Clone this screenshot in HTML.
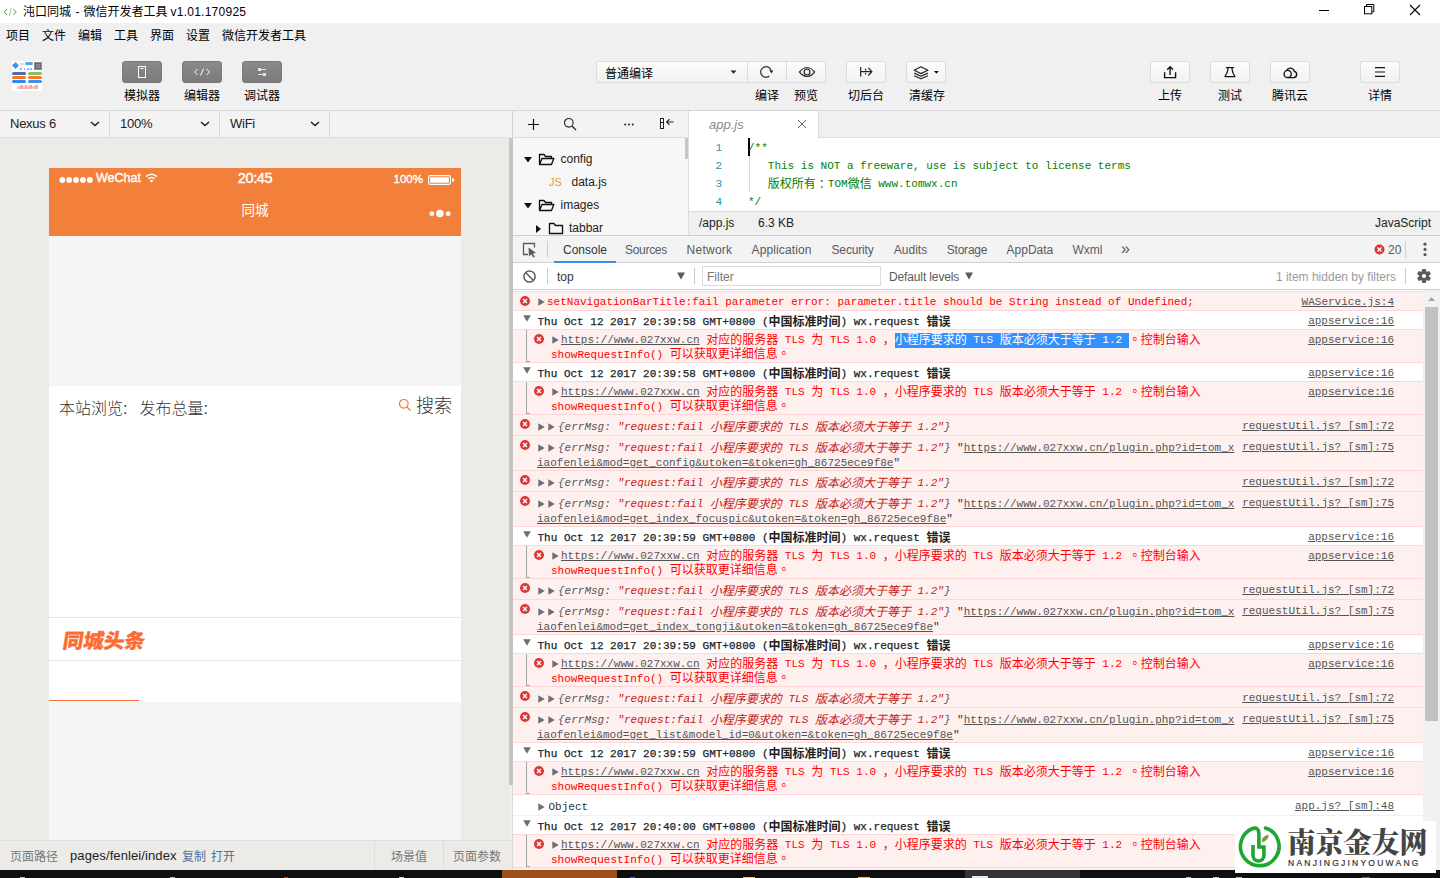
<!DOCTYPE html>
<html lang="zh-CN"><head><meta charset="utf-8"><title>微信开发者工具</title>
<style>
*{box-sizing:border-box;margin:0;padding:0}
html,body{width:1440px;height:878px;overflow:hidden;background:#f0f0f0}
body{font-family:"Liberation Sans","Noto Sans CJK SC",sans-serif;font-size:12px;color:#000}
#app{position:relative;width:1440px;height:878px;overflow:hidden;background:#f0f0f0}
.abs{position:absolute}
.ui{font-family:"Liberation Sans","Noto Sans CJK SC",sans-serif}
/* title bar */
#title{position:absolute;left:0;top:0;width:1440px;height:23px;background:#fff}
#title .t{position:absolute;left:23px;top:0;line-height:23px;font-size:12px;color:#000;white-space:nowrap;font-family:"Liberation Sans","Noto Sans CJK SC",sans-serif}
#menu{position:absolute;left:0;top:23px;width:1440px;height:24px}
#menu span{position:absolute;top:1px;line-height:24px;font-size:12px;white-space:nowrap;font-family:"Liberation Sans","Noto Sans CJK SC",sans-serif}
/* toolbar */
.tbtn{position:absolute;top:61px;width:40px;height:22px;border:1px solid #dcdcdc;border-radius:2px;background:linear-gradient(#fcfcfc,#f1f1f1)}
.tbtn.dark{background:linear-gradient(#8a8a8a,#7c7a7a);border:1px solid #7a7878;border-radius:3px}
.tlab{position:absolute;top:87px;width:80px;text-align:center;line-height:18px;font-size:12px;white-space:nowrap;font-family:"Liberation Sans","Noto Sans CJK SC",sans-serif}
.tbtn svg{position:absolute;left:0;top:0}
#hline{position:absolute;left:0;top:110px;width:1440px;height:1px;background:#d8d8d8}
/* sim toolbar */
.sel{position:absolute;top:111px;height:26px;line-height:26px;font-size:13px;color:#222;border-right:1px solid #d8d8d8;padding-left:10px;font-family:"Liberation Sans",sans-serif;letter-spacing:-0.25px}
.sel svg{position:absolute;right:9px;top:10px}
#simbg{position:absolute;left:0;top:137px;width:510px;height:703px;background:#ecebe8;border-top:1px solid #dedede}
#phone{position:absolute;left:49px;top:168px;width:412px;height:672px;background:#f5f5f5;overflow:hidden}
#phead{position:absolute;left:0;top:0;width:412px;height:68px;background:#f3803a;color:#fff}
#simfoot{position:absolute;left:0;top:840px;width:512px;height:30px;background:#ecebe8;border-top:1px solid #dcdcdc;font-size:12px;font-family:"Liberation Sans","Noto Sans CJK SC",sans-serif}
#simfoot span{position:absolute;top:2px;line-height:29px;white-space:nowrap}
#taskbar{position:absolute;left:0;top:870px;width:1440px;height:8px;background:#0f0f0f}
/* editor */
#split{position:absolute;left:510px;top:137px;width:4px;height:733px;background:#d3d3d3}
#treebar{position:absolute;left:513px;top:111px;width:175px;height:27px;background:#f3f3f3;border-bottom:1px solid #dcdcdc}
#tree{position:absolute;left:513px;top:138px;width:175px;height:97px;background:#f3f3f3;overflow:hidden;font-size:12px;color:#222}
#tree .r{position:absolute;left:0;height:23px;line-height:23px;white-space:nowrap}
#edtabs{position:absolute;left:688px;top:111px;width:752px;height:27px;background:#f0f0f0;border-bottom:1px solid #dcdcdc;border-left:1px solid #dcdcdc}
#edtab{position:absolute;left:689px;top:111px;width:130px;height:27px;background:#fff;border-right:1px solid #dcdcdc;font-style:italic;font-size:13px;color:#8a8a8a;line-height:27px}
#code{position:absolute;left:689px;top:138px;width:751px;height:73px;padding-top:1px;background:#fff;font-family:"Liberation Mono","Noto Sans CJK SC",monospace;font-size:11px}
#code .ln{position:absolute;left:0;width:33px;text-align:right;color:#2b91af;line-height:18px;font-size:11px}
#code .cl span{line-height:1px;position:relative;top:0.8px}
#code .cl{position:absolute;left:59px;color:#008000;line-height:18px;white-space:pre}
#edstat{position:absolute;left:688px;top:211px;width:752px;height:24px;background:#f0f0f0;border-top:1px solid #dcdcdc;border-left:1px solid #dcdcdc;font-size:12px;color:#222;line-height:23px}
/* devtools */
#dtabs{position:absolute;left:514px;top:235px;width:926px;height:28px;background:#f3f3f3;border-top:1px solid #cfcfcf;border-bottom:1px solid #cfcfcf}
#dtabs .tb{position:absolute;top:1px;line-height:27px;font-size:12px;color:#5a5a5a;white-space:nowrap;font-family:"Liberation Sans",sans-serif}
#ctool{position:absolute;left:514px;top:263px;width:926px;height:27px;background:#fff;border-bottom:1px solid #cfcfcf}
#ctool .tx{position:absolute;top:1px;line-height:27px;font-size:12px;white-space:nowrap;color:#5a5a5a}
#con{position:absolute;left:513px;top:290px;width:910px;height:580px;background:#fff;overflow:hidden;font-family:"Liberation Mono","Noto Sans CJK SC",monospace;font-size:11px;color:#303030}
#con .c{font-size:12px;line-height:1px;position:relative;top:0.8px}
#con .row{position:absolute;left:0;width:910px}
#con .in{position:absolute;left:1px;top:0;width:909px;height:100%}
#con .row.e{background:#fff0f0;border-top:1px solid #ffd6d6;border-bottom:1px solid #ffd6d6}
#con .row.g{background:#fff;border-top:1px solid #f0f0f0}
#con .t{position:absolute;white-space:pre;line-height:14px;height:14px}
#con .red{color:#ff0000}
#con .lnk{color:#545454;text-decoration:underline}
#con .src{position:absolute;right:29px;white-space:pre;line-height:14px;color:#545454;text-decoration:underline}
#con .it{font-style:italic}
#con .str{color:#c41a16}
#con .gray{color:#565656}
#con .b{color:#222;-webkit-text-stroke:0.25px #222}
#con .b .c{font-weight:bold;-webkit-text-stroke:0}
#con .ei{position:absolute;width:10px;height:10px}
#con .tri{position:absolute;width:0;height:0}
#con .tc{font-family:'Noto Sans CJK TC',sans-serif}
#con .hl{background:#3390ff;color:#fff;padding:1px 0 2px 0}
#vscroll{position:absolute;left:1423px;top:291px;width:17px;height:579px;background:#f1f1f1}
#vscroll i{position:absolute;left:2px;top:16px;width:13px;height:414px;background:#c1c1c1}

</style></head><body>
<div id="app">
<div id="title">
  <svg class="abs" style="left:3px;top:5.5px" width="16" height="12" viewBox="0 0 16 12"><path d="M4 3 L1.3 6 L4 9" fill="none" stroke="#5aa846" stroke-width="1"/><path d="M10.5 3 L13.2 6 L10.5 9" fill="none" stroke="#5aa846" stroke-width="1"/><path d="M8.1 2.2 L6.4 9.8" fill="none" stroke="#9ccf8e" stroke-width="1"/></svg>
  <span class="t" style="top:1px">沌口同城</span><span class="t" style="left:75.5px;top:1px">-</span><span class="t" style="left:83.5px;top:1px">微信开发者工具</span><span class="t" style="left:170.5px;top:1px;letter-spacing:0.25px">v1.01.170925</span>
  <svg class="abs" style="left:1318px;top:4px" width="12" height="12" viewBox="0 0 12 12"><path d="M1 6.5 H11" stroke="#000" stroke-width="1"/></svg>
  <svg class="abs" style="left:1363px;top:3px" width="13" height="13" viewBox="0 0 13 13"><rect x="1.5" y="3.5" width="7.3" height="7.3" fill="none" stroke="#000" stroke-width="1"/><path d="M3.5 3.5 V1.5 H10.8 V8.8 H8.8" fill="none" stroke="#000" stroke-width="1"/></svg>
  <svg class="abs" style="left:1409px;top:4px" width="12" height="12" viewBox="0 0 12 12"><path d="M1 1 L11 11 M11 1 L1 11" stroke="#000" stroke-width="1.1"/></svg>
</div>
<div id="menu">
  <span style="left:6px">项目</span><span style="left:42px">文件</span><span style="left:78px">编辑</span><span style="left:114px">工具</span><span style="left:150px">界面</span><span style="left:186px">设置</span><span style="left:222px">微信开发者工具</span>
</div>
<!-- project thumbnail -->
<div class="abs" style="left:12px;top:61px;width:30px;height:30px;background:#fff;border-radius:2px;overflow:hidden">
  <div class="abs" style="left:1.2px;top:2.2px;width:5px;height:5px;background:#3a96ee;transform:rotate(45deg)"></div>
  <div class="abs" style="left:7.5px;top:1.5px;width:4px;height:2.5px;background:#fbd3ae"></div>
  <div class="abs" style="left:12.7px;top:1px;width:8px;height:3px;background:#58a6ea;border-radius:1.5px"></div>
  <div class="abs" style="left:8px;top:6.8px;width:1.5px;height:1.8px;background:#7cc0f5"></div>
  <div class="abs" style="left:11.5px;top:6.8px;width:1.5px;height:1.8px;background:#7cc0f5"></div>
  <div class="abs" style="left:15px;top:6.8px;width:1.5px;height:1.8px;background:#7cc0f5"></div>
  <div class="abs" style="left:18.2px;top:6.8px;width:2px;height:1.8px;background:#7cc0f5"></div>
  <div class="abs" style="left:22px;top:1px;width:8px;height:8px;background:#7d7d7d;border:1px solid #8f8f8f;box-shadow:inset 0 0 0 1px #6a6a6a, inset 0 0 0 2px #8c8c8c"></div>
  <div class="abs" style="left:0;top:11px;width:14px;height:3px;background:#4c70ad;border-radius:1.5px"></div>
  <div class="abs" style="left:16px;top:11px;width:14px;height:3px;background:#8abf6a;border-radius:1.5px"></div>
  <div class="abs" style="left:0;top:15.3px;width:14px;height:3.2px;background:#f47b22;border-radius:1.5px"></div>
  <div class="abs" style="left:16px;top:15.3px;width:14px;height:3.2px;background:#f47b22;border-radius:1.5px"></div>
  <div class="abs" style="left:0;top:19px;width:14px;height:2.8px;background:#2b8af2;border-radius:1.5px"></div>
  <div class="abs" style="left:16px;top:19px;width:14px;height:2.8px;background:#3d93ee;border-radius:1.5px"></div>
  <div class="abs" style="left:5px;top:24.5px;width:21px;height:3px;background:#f7c4c2"></div>
  <div class="abs" style="left:8px;top:24px;width:3px;height:4px;background:#f3a9a6"></div>
  <div class="abs" style="left:13px;top:24px;width:2px;height:4px;background:#f3a9a6"></div>
  <div class="abs" style="left:17px;top:24px;width:3px;height:4px;background:#f3a9a6"></div>
  <div class="abs" style="left:22.5px;top:23.5px;width:3px;height:4px;background:#f3a9a6"></div>
</div>
<!-- dark buttons -->
<div class="tbtn dark" style="left:122px"><svg width="38" height="20" viewBox="0 0 38 20"><rect x="15.5" y="4.5" width="7" height="11" fill="none" stroke="#fff" stroke-width="1"/><path d="M17.5 6.5 H20.5" stroke="#fff" stroke-width="1"/></svg></div>
<div class="tbtn dark" style="left:182px"><svg width="38" height="20" viewBox="0 0 38 20"><path d="M14.5 7 L11.5 10 L14.5 13 M23.5 7 L26.5 10 L23.5 13 M20.5 6.5 L17.5 13.5" fill="none" stroke="#fff" stroke-width="1"/></svg></div>
<div class="tbtn dark" style="left:242px"><svg width="38" height="20" viewBox="0 0 38 20"><path d="M15 7.5 H23 M15 12.5 H23" stroke="#e4e4e4" stroke-width="1"/><rect x="15" y="6" width="3" height="3" fill="#e4e4e4"/><rect x="20" y="11" width="3" height="3" fill="#e4e4e4"/></svg></div>
<div class="tlab" style="left:102px">模拟器</div>
<div class="tlab" style="left:162px">编辑器</div>
<div class="tlab" style="left:222px">调试器</div>
<!-- compile select -->
<div class="abs" style="left:596px;top:61px;width:230px;height:22px;border:1px solid #dcdcdc;border-radius:2px;background:linear-gradient(#fcfcfc,#f1f1f1)"></div>
<div class="abs" style="left:747px;top:62px;width:1px;height:20px;background:#dcdcdc"></div>
<div class="abs" style="left:786px;top:62px;width:1px;height:20px;background:#dcdcdc"></div>
<div class="abs ui" style="left:605px;top:63px;line-height:23px;font-size:12px">普通编译</div>
<svg class="abs" style="left:730px;top:70px" width="7" height="4" viewBox="0 0 7 4"><path d="M0.5 0.5 H6.5 L3.5 3.8 Z" fill="#222"/></svg>
<svg class="abs" style="left:756.3px;top:62.7px" width="20" height="18" viewBox="0 0 20 18"><path d="M15.3 9 A5.3 5.3 0 1 0 13.4 13.06" fill="none" stroke="#333" stroke-width="1.2"/><path d="M13.2 7.4 H17.4 L15.5 10.6 Z" fill="#333"/></svg>
<svg class="abs" style="left:796.6px;top:63.8px" width="20" height="16" viewBox="0 0 20 16"><path d="M2.4 8 Q10 -1 17.6 8 Q10 17 2.4 8 Z" fill="none" stroke="#333" stroke-width="1.2"/><circle cx="10" cy="8" r="2.9" fill="none" stroke="#333" stroke-width="1.3"/></svg>
<div class="tlab" style="left:727px">编译</div>
<div class="tlab" style="left:766px">预览</div>
<div class="tbtn" style="left:846px"><svg width="38" height="20" viewBox="0 0 38 20"><path d="M13.7 5 V14.6 M13.7 9.7 H24.5 M21.3 5.9 L24.9 9.7 L21.3 13.5" fill="none" stroke="#222" stroke-width="1.2"/><path d="M18.6 6.8 V8.4 M18.6 11 V12.6" stroke="#222" stroke-width="1.2"/></svg></div>
<div class="tlab" style="left:826px">切后台</div>
<div class="tbtn" style="left:906px"><svg width="38" height="20" viewBox="0 0 38 20"><path d="M7.2 8.3 L14 4.8 L20.9 8.3 L14 11.6 Z M7.2 11.1 L14 14.3 L20.9 11.1 M7.2 13.7 L14 16.8 L20.9 13.7" fill="none" stroke="#222" stroke-width="1.2" stroke-linejoin="round"/><path d="M27 9 H31.8 L29.4 11.7 Z" fill="#111"/></svg></div>
<div class="tlab" style="left:887px">清缓存</div>
<div class="tbtn" style="left:1150px"><svg width="38" height="20" viewBox="0 0 38 20"><path d="M13.6 10.3 V15.6 H24.6 V10.3 M19.1 13 V5 M16.2 7.8 L19.1 4.8 L22 7.8" fill="none" stroke="#111" stroke-width="1.35"/></svg></div>
<div class="tlab" style="left:1130px">上传</div>
<div class="tbtn" style="left:1210px"><svg width="38" height="20" viewBox="0 0 38 20"><path d="M14.9 5.6 H23.1" stroke="#111" stroke-width="1.2"/><path d="M16.9 5.6 V7.6 Q16.4 11 13.9 14.6 H24 Q21.5 11 21.1 7.6 V5.6" fill="none" stroke="#111" stroke-width="1.2" stroke-linejoin="round"/></svg></div>
<div class="tlab" style="left:1190px">测试</div>
<div class="tbtn" style="left:1270px"><svg width="38" height="20" viewBox="0 0 38 20"><path d="M16.8 15.6 H22.4 A3.15 3.15 0 0 0 23.3 9.4 A4 4 0 0 0 15.7 8.5" fill="none" stroke="#111" stroke-width="1.35"/><circle cx="16.7" cy="12" r="3.6" fill="none" stroke="#111" stroke-width="1.35"/></svg></div>
<div class="tlab" style="left:1250px">腾讯云</div>
<div class="tbtn" style="left:1360px"><svg width="38" height="20" viewBox="0 0 38 20"><path d="M14 5.6 H24 M14 10 H24 M14 14.3 H24" stroke="#111" stroke-width="1.15"/></svg></div>
<div class="tlab" style="left:1340px">详情</div>
<div id="hline"></div>
<!-- simulator toolbar -->
<div class="abs" style="left:0;top:111px;width:512px;height:26px;background:#f3f3f3"></div>
<div class="sel" style="left:0;width:110px">Nexus 6<svg width="10" height="6" viewBox="0 0 10 6"><path d="M1 1 L5 4.6 L9 1" fill="none" stroke="#222" stroke-width="1.5"/></svg></div>
<div class="sel" style="left:110px;width:110px">100%<svg width="10" height="6" viewBox="0 0 10 6"><path d="M1 1 L5 4.6 L9 1" fill="none" stroke="#222" stroke-width="1.5"/></svg></div>
<div class="sel" style="left:220px;width:110px">WiFi<svg width="10" height="6" viewBox="0 0 10 6"><path d="M1 1 L5 4.6 L9 1" fill="none" stroke="#222" stroke-width="1.5"/></svg></div>
<div class="abs" style="left:512px;top:111px;width:1px;height:26px;background:#d2d2d2"></div>
<div id="simbg"></div>
<div class="abs" style="left:512px;top:137px;width:1px;height:733px;background:#dadada"></div>
<div class="abs" style="left:509px;top:138px;width:4px;height:647px;background:#c5c5c5"></div>
<div id="phone">
  <div id="phead">
    <svg class="abs" style="left:9px;top:8px" width="36" height="8" viewBox="0 0 36 8"><circle cx="4.3" cy="4" r="2.9" fill="#fff"/><circle cx="11.2" cy="4" r="2.9" fill="#fff"/><circle cx="18.1" cy="4" r="2.9" fill="#fff"/><circle cx="25" cy="4" r="2.9" fill="#fff"/><circle cx="31.9" cy="4" r="2.9" fill="#fff"/></svg>
    <div class="abs" style="left:47px;top:3px;line-height:14px;font-size:12.5px;font-weight:normal;-webkit-text-stroke:0.4px #fff;letter-spacing:0px">WeChat</div>
    <svg class="abs" style="left:96px;top:5px" width="13" height="10" viewBox="0 0 13 10"><path d="M1 3.6 Q6.5 -1.2 12 3.6" fill="none" stroke="#fff" stroke-width="1.4"/><path d="M3.2 5.8 Q6.5 3 9.8 5.8" fill="none" stroke="#fff" stroke-width="1.4"/><circle cx="6.5" cy="8" r="1.3" fill="#fff"/></svg>
    <div class="abs" style="left:156px;top:1px;width:100px;text-align:center;line-height:18px;font-size:14.5px;font-weight:normal;-webkit-text-stroke:0.4px #fff;letter-spacing:-0.4px">20:45</div>
    <div class="abs" style="left:344.5px;top:4px;line-height:14px;font-size:11.5px;font-weight:normal;-webkit-text-stroke:0.35px #fff;letter-spacing:0px">100%</div>
    <svg class="abs" style="left:378px;top:6px" width="30" height="12" viewBox="0 0 30 12"><rect x="1.6" y="1.6" width="21.9" height="8.8" rx="1.6" fill="none" stroke="#fff" stroke-width="1.1"/><rect x="3.2" y="3.2" width="18.7" height="5.6" rx="0.4" fill="#fff"/><path d="M25.2 4 L27.2 5 V7 L25.2 8 Z" fill="#fff"/></svg>
    <div class="abs ui" style="left:156px;top:33px;width:100px;text-align:center;line-height:20px;font-size:13.5px">同城</div>
    <svg class="abs" style="left:380px;top:40px" width="24" height="10" viewBox="0 0 24 10"><circle cx="2.8" cy="5.7" r="2.4" fill="#fff"/><circle cx="10.9" cy="5.5" r="3.75" fill="#fff"/><circle cx="19.2" cy="5.7" r="2.4" fill="#fff"/></svg>
  </div>
  <div class="abs" style="left:0;top:218px;width:412px;height:316px;background:#fff"></div>
  <div class="abs ui" style="left:10px;top:230.3px;line-height:22px;font-size:16px;color:#333;white-space:pre;font-weight:300">本站浏览:</div><div class="abs ui" style="left:90.5px;top:230.3px;line-height:22px;font-size:16px;color:#333;white-space:pre;font-weight:300">发布总量:</div>
  <svg class="abs" style="left:349px;top:230px" width="14" height="14" viewBox="0 0 14 14"><circle cx="5.8" cy="5.8" r="4.3" fill="none" stroke="#f07a3c" stroke-width="1.2"/><path d="M9 9 L12.6 12.6" stroke="#f07a3c" stroke-width="1.3"/></svg>
  <div class="abs ui" style="left:367px;top:224.5px;line-height:26px;font-size:18px;color:#333;font-weight:300">搜索</div>
  <div class="abs" style="left:0;top:449px;width:412px;height:1px;background:#e6e6e6"></div>
  <div class="abs" style="left:12px;top:459px;line-height:28px;font-size:20px;color:#fd6b30;font-weight:900;font-family:'Liberation Sans','Noto Sans CJK SC',sans-serif;transform:skewX(-9deg) scaleX(1.025);transform-origin:0 100%;-webkit-text-stroke:0.3px #fd6b30">同城头条</div>
  <div class="abs" style="left:0;top:492px;width:412px;height:1px;background:#e6e6e6"></div>
  <div class="abs" style="left:0;top:532px;width:90px;height:1px;background:#fb7038"></div>
</div>
<div id="simfoot">
  <span style="left:10px;color:#777">页面路径</span>
  <span style="left:70px;top:0;color:#222;font-family:'Liberation Sans',sans-serif;font-size:13px;letter-spacing:0.1px">pages/fenlei/index</span>
  <span style="left:182px;color:#50709a">复制</span>
  <span style="left:211px;color:#50709a">打开</span>
  <span style="left:391px;color:#777">场景值</span>
  <span style="left:453px;color:#777">页面参数</span>
  <div class="abs" style="left:374px;top:0;width:1px;height:30px;background:#dcdcdc"></div>
  <div class="abs" style="left:443px;top:0;width:1px;height:30px;background:#dcdcdc"></div>
</div>
<div id="treebar">
  <svg class="abs" style="left:15px;top:8px" width="11" height="11" viewBox="0 0 11 11"><path d="M5.5 0 V11 M0 5.5 H11" stroke="#111" stroke-width="1.2"/></svg>
  <svg class="abs" style="left:50px;top:6px" width="14" height="14" viewBox="0 0 14 14"><circle cx="5.8" cy="5.8" r="4.3" fill="none" stroke="#222" stroke-width="1.1"/><path d="M9 9 L13 13" stroke="#222" stroke-width="1.2"/></svg>
  <svg class="abs" style="left:111px;top:12px" width="10" height="3" viewBox="0 0 10 3"><circle cx="1.2" cy="1.5" r="1" fill="#222"/><circle cx="5" cy="1.5" r="1" fill="#222"/><circle cx="8.8" cy="1.5" r="1" fill="#222"/></svg>
  <svg class="abs" style="left:146px;top:6px" width="16" height="14" viewBox="0 0 16 14"><rect x="1.5" y="1.5" width="3" height="10" fill="none" stroke="#222" stroke-width="1"/><path d="M2 5.5 H4.5" stroke="#222" stroke-width="1"/><path d="M14.5 5 H8 M10.5 2.2 L7.6 5 L10.5 7.8" fill="none" stroke="#222" stroke-width="1.1"/></svg>
</div>
<div id="tree" style="background:#f7f7f7">
  <div class="r" style="top:10px">
    <svg class="abs" style="left:11px;top:9px" width="8" height="5.5" viewBox="0 0 8 5.5"><path d="M0 0 H8 L4 5.5 Z" fill="#111"/></svg>
    <svg class="abs" style="left:25px;top:5px" width="17" height="13" viewBox="0 0 17 13"><path d="M1.5 11.5 V1.5 H6 L7.5 3.5 H13.5 V5.5 M1.5 11.5 L4 5.5 H15.8 L13.5 11.5 Z" fill="none" stroke="#111" stroke-width="1.35" stroke-linejoin="round"/></svg>
    <span class="abs" style="left:47.5px">config</span>
  </div>
  <div class="r" style="top:33px">
    <span class="abs" style="left:36px;color:#e6a01c;font-size:11px;font-family:'Liberation Sans',sans-serif">JS</span>
    <span class="abs" style="left:58.5px">data.js</span>
  </div>
  <div class="r" style="top:56px">
    <svg class="abs" style="left:11px;top:9px" width="8" height="5.5" viewBox="0 0 8 5.5"><path d="M0 0 H8 L4 5.5 Z" fill="#111"/></svg>
    <svg class="abs" style="left:25px;top:5px" width="17" height="13" viewBox="0 0 17 13"><path d="M1.5 11.5 V1.5 H6 L7.5 3.5 H13.5 V5.5 M1.5 11.5 L4 5.5 H15.8 L13.5 11.5 Z" fill="none" stroke="#111" stroke-width="1.35" stroke-linejoin="round"/></svg>
    <span class="abs" style="left:47.5px">images</span>
  </div>
  <div class="r" style="top:79px">
    <svg class="abs" style="left:23.3px;top:8px" width="5" height="8" viewBox="0 0 5 8"><path d="M0 0 V8 L5 4 Z" fill="#111"/></svg>
    <svg class="abs" style="left:35px;top:5px" width="16" height="13" viewBox="0 0 16 13"><path d="M1.5 11.5 V1.5 H6 L7.5 3.5 H14.5 V11.5 Z" fill="none" stroke="#111" stroke-width="1.35" stroke-linejoin="round"/></svg>
    <span class="abs" style="left:56px">tabbar</span>
  </div>
  <div class="abs" style="left:172px;top:0;width:3px;height:21px;background:#c6c6c6"></div>
</div>
<div id="edtabs"></div>
<div id="edtab"><span class="abs" style="left:20px">app.js</span>
  <svg class="abs" style="left:108px;top:8px" width="10" height="10" viewBox="0 0 10 10"><path d="M1 1 L9 9 M9 1 L1 9" stroke="#666" stroke-width="1"/></svg>
</div>
<div id="code">
  <div class="ln" style="top:1px">1</div><div class="ln" style="top:19px">2</div><div class="ln" style="top:37px">3</div><div class="ln" style="top:55px">4</div>
  <div class="abs" style="left:59px;top:0;width:2px;height:18px;background:#000"></div>
  <div class="abs" style="left:59.5px;top:18px;width:1px;height:36px;background:#d8d8d8"></div>
  <div class="cl" style="top:1px">/**</div>
  <div class="cl" style="top:19px">   This is NOT a freeware, use is subject to license terms</div>
  <div class="cl" style="top:37px">   <span style="font-size:12px">版权所有<span lang="ja" style="font-family:'Noto Sans CJK JP',sans-serif">：</span></span>TOM<span style="font-size:12px">微信</span> www.tomwx.cn</div>
  <div class="cl" style="top:55px">*/</div>
</div>
<div id="edstat"><span class="abs" style="left:10px">/app.js</span><span class="abs" style="left:69px">6.3 KB</span><span class="abs" style="right:9px">JavaScript</span></div>
<div class="abs" style="left:688px;top:137px;width:1px;height:98px;background:#dcdcdc"></div>
<!-- devtools tabs -->
<div class="abs" style="left:513px;top:235px;width:1px;height:28px;background:#f3f3f3;border-top:1px solid #cfcfcf;border-bottom:1px solid #cfcfcf"></div>
<div class="abs" style="left:513px;top:263px;width:1px;height:27px;background:#fff;border-bottom:1px solid #cfcfcf"></div>
<div id="dtabs">
  <svg class="abs" style="left:8px;top:6px" width="16" height="16" viewBox="0 0 16 16"><path d="M6 12.5 H1.5 V1.5 H12.5 V5.5" fill="none" stroke="#5a5a5a" stroke-width="1.3"/><path d="M6.5 5.5 L7 14.5 L9.3 12.2 L11.2 15.6 L12.8 14.8 L10.9 11.4 L14 11 Z" fill="#5a5a5a"/></svg>
  <div class="abs" style="left:33px;top:5px;width:1px;height:16px;background:#ccc"></div>
  <span class="tb" style="left:49px;color:#333">Console</span>
  <span class="tb" style="left:111px;letter-spacing:-0.3px">Sources</span>
  <span class="tb" style="left:172.6px;letter-spacing:0.25px">Network</span>
  <span class="tb" style="left:237.5px;letter-spacing:0.13px">Application</span>
  <span class="tb" style="left:317.5px;letter-spacing:-0.15px">Security</span>
  <span class="tb" style="left:379.8px">Audits</span>
  <span class="tb" style="left:432.7px;letter-spacing:-0.2px">Storage</span>
  <span class="tb" style="left:492.6px">AppData</span>
  <span class="tb" style="left:558.5px">Wxml</span>
  <span class="tb" style="left:607px;font-size:16px;top:-1px">»</span>
  <div class="abs" style="left:40px;top:25px;width:62px;height:2px;background:#3b8cf2"></div>
  <svg class="abs" style="left:859.5px;top:7.5px" width="11" height="11" viewBox="0 0 11 11"><circle cx="5.5" cy="5.5" r="5" fill="#e0343c"/><path d="M3.5 3.5 L7.5 7.5 M7.5 3.5 L3.5 7.5" stroke="#fff" stroke-width="1.3"/></svg>
  <span class="tb" style="left:874px">20</span>
  <div class="abs" style="left:891px;top:5px;width:1px;height:17px;background:#ccc"></div>
  <svg class="abs" style="left:908.5px;top:6px" width="4" height="15" viewBox="0 0 4 15"><circle cx="2" cy="2.2" r="1.6" fill="#5a5a5a"/><circle cx="2" cy="7.4" r="1.6" fill="#5a5a5a"/><circle cx="2" cy="12.6" r="1.6" fill="#5a5a5a"/></svg>
</div>
<div id="ctool">
  <svg class="abs" style="left:9px;top:7px" width="13" height="13" viewBox="0 0 13 13"><circle cx="6.5" cy="6.5" r="5.6" fill="none" stroke="#5a5a5a" stroke-width="1.5"/><path d="M2.5 2.5 L10.5 10.5" stroke="#5a5a5a" stroke-width="1.5"/></svg>
  <div class="abs" style="left:33px;top:5px;width:1px;height:16px;background:#ccc"></div>
  <span class="tx" style="left:43px;color:#333">top</span>
  <svg class="abs" style="left:163px;top:9px" width="8" height="8" viewBox="0 0 8 8"><path d="M0 0.5 H8 L4 7.5 Z" fill="#5a5a5a"/></svg>
  <div class="abs" style="left:180px;top:5px;width:1px;height:16px;background:#ccc"></div>
  <div class="abs" style="left:188px;top:3px;width:179px;height:20px;border:1px solid #dcdcdc"></div>
  <span class="tx" style="left:193px;color:#777">Filter</span>
  <span class="tx" style="left:375px;letter-spacing:-0.13px">Default levels</span>
  <svg class="abs" style="left:451px;top:9px" width="8" height="8" viewBox="0 0 8 8"><path d="M0 0.5 H8 L4 7.5 Z" fill="#5a5a5a"/></svg>
  <span class="tx" style="right:44px;color:#9a9a9a">1 item hidden by filters</span>
  <div class="abs" style="left:891px;top:5px;width:1px;height:16px;background:#ccc"></div>
  <svg class="abs" style="left:903px;top:6px" width="14" height="14" viewBox="-7 -7 14 14"><g fill="#5a5a5a"><circle r="5"/><path d="M-1.7 -7 H1.7 L2.3 -4 H-2.3 Z" transform="rotate(0)"/><path d="M-1.7 -7 H1.7 L2.3 -4 H-2.3 Z" transform="rotate(60)"/><path d="M-1.7 -7 H1.7 L2.3 -4 H-2.3 Z" transform="rotate(120)"/><path d="M-1.7 -7 H1.7 L2.3 -4 H-2.3 Z" transform="rotate(180)"/><path d="M-1.7 -7 H1.7 L2.3 -4 H-2.3 Z" transform="rotate(240)"/><path d="M-1.7 -7 H1.7 L2.3 -4 H-2.3 Z" transform="rotate(300)"/></g><circle r="2.1" fill="#fff"/></svg>
</div>
<div id="con">
<div class="row e" style="top:1px;height:20px;z-index:2"><div class="in"><svg class="ei" style="left:6px;top:4px" viewBox="0 0 10 10"><circle cx="5" cy="5" r="5" fill="#dc3838"/><path d="M3.1 3.1 L6.9 6.9 M6.9 3.1 L3.1 6.9" stroke="#fff" stroke-width="1.4"/></svg><svg class="abs" style="left:24px;top:5.5px" width="7" height="8" viewBox="0 0 7 8"><path d="M0.3 0.3 V7.7 L6.7 4 Z" fill="#6e6e6e"/></svg><div class="t red" style="left:33px;top:3px">setNavigationBarTitle:fail parameter error: parameter.title should be String instead of Undefined;</div><div class="src" style="top:3px">WAService.js:4</div></div></div>
<div class="row g" style="top:20px;height:20px;z-index:1"><div class="in"><svg class="abs" style="left:9.2px;top:3.9px" width="8" height="7" viewBox="0 0 8 7"><path d="M0.2 0.2 H7.8 L4 6.8 Z" fill="#6e6e6e"/></svg><div class="t b" style="left:23.5px;top:3.75px">Thu Oct 12 2017 20:39:58 GMT+0800 (<span class="c">中国标准时间</span>) wx.request <span class="c">错误</span></div><div class="src" style="top:3px">appservice:16</div></div></div>
<div class="row e" style="top:39px;height:34px;z-index:2"><div class="in"><div class="abs" style="left:12px;top:0;width:1px;height:31px;background:#a3a3a3"></div><div class="abs" style="left:12px;top:31px;width:4px;height:1px;background:#a3a3a3"></div><svg class="ei" style="left:20px;top:4px" viewBox="0 0 10 10"><circle cx="5" cy="5" r="5" fill="#dc3838"/><path d="M3.1 3.1 L6.9 6.9 M6.9 3.1 L3.1 6.9" stroke="#fff" stroke-width="1.4"/></svg><svg class="abs" style="left:37.7px;top:5.5px" width="7" height="8" viewBox="0 0 7 8"><path d="M0.3 0.3 V7.7 L6.7 4 Z" fill="#6e6e6e"/></svg><div class="t red" style="left:47px;top:3.25px"><span class="lnk">https://www.027xxw.cn</span> <span class="c">对应的服务器</span> TLS <span class="c">为</span> TLS 1.0 <span class="c">，</span><span class="hl"><span class="c">小程序要求的</span> TLS <span class="c">版本必须大于等于</span> 1.2 </span><span class="c"><span class="tc" lang="zh-TW">。</span>控制台输入</span></div><div class="t red" style="left:37px;top:17.5px">showRequestInfo() <span class="c">可以获取更详细信息<span class="tc" lang="zh-TW">。</span></span></div><div class="src" style="top:3px">appservice:16</div></div></div>
<div class="row g" style="top:72px;height:20px;z-index:1"><div class="in"><svg class="abs" style="left:9.2px;top:3.9px" width="8" height="7" viewBox="0 0 8 7"><path d="M0.2 0.2 H7.8 L4 6.8 Z" fill="#6e6e6e"/></svg><div class="t b" style="left:23.5px;top:3.75px">Thu Oct 12 2017 20:39:58 GMT+0800 (<span class="c">中国标准时间</span>) wx.request <span class="c">错误</span></div><div class="src" style="top:3px">appservice:16</div></div></div>
<div class="row e" style="top:91px;height:34px;z-index:2"><div class="in"><div class="abs" style="left:12px;top:0;width:1px;height:31px;background:#a3a3a3"></div><div class="abs" style="left:12px;top:31px;width:4px;height:1px;background:#a3a3a3"></div><svg class="ei" style="left:20px;top:4px" viewBox="0 0 10 10"><circle cx="5" cy="5" r="5" fill="#dc3838"/><path d="M3.1 3.1 L6.9 6.9 M6.9 3.1 L3.1 6.9" stroke="#fff" stroke-width="1.4"/></svg><svg class="abs" style="left:37.7px;top:5.5px" width="7" height="8" viewBox="0 0 7 8"><path d="M0.3 0.3 V7.7 L6.7 4 Z" fill="#6e6e6e"/></svg><div class="t red" style="left:47px;top:3.25px"><span class="lnk">https://www.027xxw.cn</span> <span class="c">对应的服务器</span> TLS <span class="c">为</span> TLS 1.0 <span class="c">，</span><span class="c">小程序要求的</span> TLS <span class="c">版本必须大于等于</span> 1.2 <span class="c"><span class="tc" lang="zh-TW">。</span>控制台输入</span></div><div class="t red" style="left:37px;top:17.5px">showRequestInfo() <span class="c">可以获取更详细信息<span class="tc" lang="zh-TW">。</span></span></div><div class="src" style="top:3px">appservice:16</div></div></div>
<div class="row e" style="top:124px;height:22px;z-index:2"><div class="in"><svg class="ei" style="left:6px;top:3.5px" viewBox="0 0 10 10"><circle cx="5" cy="5" r="5" fill="#dc3838"/><path d="M3.1 3.1 L6.9 6.9 M6.9 3.1 L3.1 6.9" stroke="#fff" stroke-width="1.4"/></svg><svg class="abs" style="left:24px;top:8px" width="7" height="8" viewBox="0 0 7 8"><path d="M0.3 0.3 V7.7 L6.7 4 Z" fill="#6e6e6e"/></svg><svg class="abs" style="left:33.7px;top:8px" width="7" height="8" viewBox="0 0 7 8"><path d="M0.3 0.3 V7.7 L6.7 4 Z" fill="#6e6e6e"/></svg><div class="t " style="left:44px;top:5px"><span class="it"><span class="gray">{errMsg: </span><span class="str">"request:fail <span class="c">小程序要求的</span> TLS <span class="c">版本必须大于等于</span> 1.2"</span><span class="gray">}</span></span></div><div class="src" style="top:3.5px">requestUtil.js? [sm]:72</div></div></div>
<div class="row e" style="top:145px;height:36px;z-index:2"><div class="in"><svg class="ei" style="left:6px;top:4px" viewBox="0 0 10 10"><circle cx="5" cy="5" r="5" fill="#dc3838"/><path d="M3.1 3.1 L6.9 6.9 M6.9 3.1 L3.1 6.9" stroke="#fff" stroke-width="1.4"/></svg><svg class="abs" style="left:24px;top:7.75px" width="7" height="8" viewBox="0 0 7 8"><path d="M0.3 0.3 V7.7 L6.7 4 Z" fill="#6e6e6e"/></svg><svg class="abs" style="left:33.7px;top:7.75px" width="7" height="8" viewBox="0 0 7 8"><path d="M0.3 0.3 V7.7 L6.7 4 Z" fill="#6e6e6e"/></svg><div class="t " style="left:44px;top:4.75px"><span class="it"><span class="gray">{errMsg: </span><span class="str">"request:fail <span class="c">小程序要求的</span> TLS <span class="c">版本必须大于等于</span> 1.2"</span><span class="gray">}</span></span> "<span class="lnk">https://www.027xxw.cn/plugin.php?id=tom_x</span></div><div class="t " style="left:23px;top:19.75px"><span class="lnk">iaofenlei&amp;mod=get_config&amp;utoken=&amp;token=gh_86725ece9f8e</span>"</div><div class="src" style="top:3.5px">requestUtil.js? [sm]:75</div></div></div>
<div class="row e" style="top:180px;height:22px;z-index:2"><div class="in"><svg class="ei" style="left:6px;top:3.5px" viewBox="0 0 10 10"><circle cx="5" cy="5" r="5" fill="#dc3838"/><path d="M3.1 3.1 L6.9 6.9 M6.9 3.1 L3.1 6.9" stroke="#fff" stroke-width="1.4"/></svg><svg class="abs" style="left:24px;top:8px" width="7" height="8" viewBox="0 0 7 8"><path d="M0.3 0.3 V7.7 L6.7 4 Z" fill="#6e6e6e"/></svg><svg class="abs" style="left:33.7px;top:8px" width="7" height="8" viewBox="0 0 7 8"><path d="M0.3 0.3 V7.7 L6.7 4 Z" fill="#6e6e6e"/></svg><div class="t " style="left:44px;top:5px"><span class="it"><span class="gray">{errMsg: </span><span class="str">"request:fail <span class="c">小程序要求的</span> TLS <span class="c">版本必须大于等于</span> 1.2"</span><span class="gray">}</span></span></div><div class="src" style="top:3.5px">requestUtil.js? [sm]:72</div></div></div>
<div class="row e" style="top:201px;height:36px;z-index:2"><div class="in"><svg class="ei" style="left:6px;top:4px" viewBox="0 0 10 10"><circle cx="5" cy="5" r="5" fill="#dc3838"/><path d="M3.1 3.1 L6.9 6.9 M6.9 3.1 L3.1 6.9" stroke="#fff" stroke-width="1.4"/></svg><svg class="abs" style="left:24px;top:7.75px" width="7" height="8" viewBox="0 0 7 8"><path d="M0.3 0.3 V7.7 L6.7 4 Z" fill="#6e6e6e"/></svg><svg class="abs" style="left:33.7px;top:7.75px" width="7" height="8" viewBox="0 0 7 8"><path d="M0.3 0.3 V7.7 L6.7 4 Z" fill="#6e6e6e"/></svg><div class="t " style="left:44px;top:4.75px"><span class="it"><span class="gray">{errMsg: </span><span class="str">"request:fail <span class="c">小程序要求的</span> TLS <span class="c">版本必须大于等于</span> 1.2"</span><span class="gray">}</span></span> "<span class="lnk">https://www.027xxw.cn/plugin.php?id=tom_x</span></div><div class="t " style="left:23px;top:19.75px"><span class="lnk">iaofenlei&amp;mod=get_index_focuspic&amp;utoken=&amp;token=gh_86725ece9f8e</span>"</div><div class="src" style="top:3.5px">requestUtil.js? [sm]:75</div></div></div>
<div class="row g" style="top:236px;height:20px;z-index:1"><div class="in"><svg class="abs" style="left:9.2px;top:3.9px" width="8" height="7" viewBox="0 0 8 7"><path d="M0.2 0.2 H7.8 L4 6.8 Z" fill="#6e6e6e"/></svg><div class="t b" style="left:23.5px;top:3.75px">Thu Oct 12 2017 20:39:59 GMT+0800 (<span class="c">中国标准时间</span>) wx.request <span class="c">错误</span></div><div class="src" style="top:3px">appservice:16</div></div></div>
<div class="row e" style="top:255px;height:34px;z-index:2"><div class="in"><div class="abs" style="left:12px;top:0;width:1px;height:31px;background:#a3a3a3"></div><div class="abs" style="left:12px;top:31px;width:4px;height:1px;background:#a3a3a3"></div><svg class="ei" style="left:20px;top:4px" viewBox="0 0 10 10"><circle cx="5" cy="5" r="5" fill="#dc3838"/><path d="M3.1 3.1 L6.9 6.9 M6.9 3.1 L3.1 6.9" stroke="#fff" stroke-width="1.4"/></svg><svg class="abs" style="left:37.7px;top:5.5px" width="7" height="8" viewBox="0 0 7 8"><path d="M0.3 0.3 V7.7 L6.7 4 Z" fill="#6e6e6e"/></svg><div class="t red" style="left:47px;top:3.25px"><span class="lnk">https://www.027xxw.cn</span> <span class="c">对应的服务器</span> TLS <span class="c">为</span> TLS 1.0 <span class="c">，</span><span class="c">小程序要求的</span> TLS <span class="c">版本必须大于等于</span> 1.2 <span class="c"><span class="tc" lang="zh-TW">。</span>控制台输入</span></div><div class="t red" style="left:37px;top:17.5px">showRequestInfo() <span class="c">可以获取更详细信息<span class="tc" lang="zh-TW">。</span></span></div><div class="src" style="top:3px">appservice:16</div></div></div>
<div class="row e" style="top:288px;height:22px;z-index:2"><div class="in"><svg class="ei" style="left:6px;top:3.5px" viewBox="0 0 10 10"><circle cx="5" cy="5" r="5" fill="#dc3838"/><path d="M3.1 3.1 L6.9 6.9 M6.9 3.1 L3.1 6.9" stroke="#fff" stroke-width="1.4"/></svg><svg class="abs" style="left:24px;top:8px" width="7" height="8" viewBox="0 0 7 8"><path d="M0.3 0.3 V7.7 L6.7 4 Z" fill="#6e6e6e"/></svg><svg class="abs" style="left:33.7px;top:8px" width="7" height="8" viewBox="0 0 7 8"><path d="M0.3 0.3 V7.7 L6.7 4 Z" fill="#6e6e6e"/></svg><div class="t " style="left:44px;top:5px"><span class="it"><span class="gray">{errMsg: </span><span class="str">"request:fail <span class="c">小程序要求的</span> TLS <span class="c">版本必须大于等于</span> 1.2"</span><span class="gray">}</span></span></div><div class="src" style="top:3.5px">requestUtil.js? [sm]:72</div></div></div>
<div class="row e" style="top:309px;height:36px;z-index:2"><div class="in"><svg class="ei" style="left:6px;top:4px" viewBox="0 0 10 10"><circle cx="5" cy="5" r="5" fill="#dc3838"/><path d="M3.1 3.1 L6.9 6.9 M6.9 3.1 L3.1 6.9" stroke="#fff" stroke-width="1.4"/></svg><svg class="abs" style="left:24px;top:7.75px" width="7" height="8" viewBox="0 0 7 8"><path d="M0.3 0.3 V7.7 L6.7 4 Z" fill="#6e6e6e"/></svg><svg class="abs" style="left:33.7px;top:7.75px" width="7" height="8" viewBox="0 0 7 8"><path d="M0.3 0.3 V7.7 L6.7 4 Z" fill="#6e6e6e"/></svg><div class="t " style="left:44px;top:4.75px"><span class="it"><span class="gray">{errMsg: </span><span class="str">"request:fail <span class="c">小程序要求的</span> TLS <span class="c">版本必须大于等于</span> 1.2"</span><span class="gray">}</span></span> "<span class="lnk">https://www.027xxw.cn/plugin.php?id=tom_x</span></div><div class="t " style="left:23px;top:19.75px"><span class="lnk">iaofenlei&amp;mod=get_index_tongji&amp;utoken=&amp;token=gh_86725ece9f8e</span>"</div><div class="src" style="top:3.5px">requestUtil.js? [sm]:75</div></div></div>
<div class="row g" style="top:344px;height:20px;z-index:1"><div class="in"><svg class="abs" style="left:9.2px;top:3.9px" width="8" height="7" viewBox="0 0 8 7"><path d="M0.2 0.2 H7.8 L4 6.8 Z" fill="#6e6e6e"/></svg><div class="t b" style="left:23.5px;top:3.75px">Thu Oct 12 2017 20:39:59 GMT+0800 (<span class="c">中国标准时间</span>) wx.request <span class="c">错误</span></div><div class="src" style="top:3px">appservice:16</div></div></div>
<div class="row e" style="top:363px;height:34px;z-index:2"><div class="in"><div class="abs" style="left:12px;top:0;width:1px;height:31px;background:#a3a3a3"></div><div class="abs" style="left:12px;top:31px;width:4px;height:1px;background:#a3a3a3"></div><svg class="ei" style="left:20px;top:4px" viewBox="0 0 10 10"><circle cx="5" cy="5" r="5" fill="#dc3838"/><path d="M3.1 3.1 L6.9 6.9 M6.9 3.1 L3.1 6.9" stroke="#fff" stroke-width="1.4"/></svg><svg class="abs" style="left:37.7px;top:5.5px" width="7" height="8" viewBox="0 0 7 8"><path d="M0.3 0.3 V7.7 L6.7 4 Z" fill="#6e6e6e"/></svg><div class="t red" style="left:47px;top:3.25px"><span class="lnk">https://www.027xxw.cn</span> <span class="c">对应的服务器</span> TLS <span class="c">为</span> TLS 1.0 <span class="c">，</span><span class="c">小程序要求的</span> TLS <span class="c">版本必须大于等于</span> 1.2 <span class="c"><span class="tc" lang="zh-TW">。</span>控制台输入</span></div><div class="t red" style="left:37px;top:17.5px">showRequestInfo() <span class="c">可以获取更详细信息<span class="tc" lang="zh-TW">。</span></span></div><div class="src" style="top:3px">appservice:16</div></div></div>
<div class="row e" style="top:396px;height:22px;z-index:2"><div class="in"><svg class="ei" style="left:6px;top:3.5px" viewBox="0 0 10 10"><circle cx="5" cy="5" r="5" fill="#dc3838"/><path d="M3.1 3.1 L6.9 6.9 M6.9 3.1 L3.1 6.9" stroke="#fff" stroke-width="1.4"/></svg><svg class="abs" style="left:24px;top:8px" width="7" height="8" viewBox="0 0 7 8"><path d="M0.3 0.3 V7.7 L6.7 4 Z" fill="#6e6e6e"/></svg><svg class="abs" style="left:33.7px;top:8px" width="7" height="8" viewBox="0 0 7 8"><path d="M0.3 0.3 V7.7 L6.7 4 Z" fill="#6e6e6e"/></svg><div class="t " style="left:44px;top:5px"><span class="it"><span class="gray">{errMsg: </span><span class="str">"request:fail <span class="c">小程序要求的</span> TLS <span class="c">版本必须大于等于</span> 1.2"</span><span class="gray">}</span></span></div><div class="src" style="top:3.5px">requestUtil.js? [sm]:72</div></div></div>
<div class="row e" style="top:417px;height:36px;z-index:2"><div class="in"><svg class="ei" style="left:6px;top:4px" viewBox="0 0 10 10"><circle cx="5" cy="5" r="5" fill="#dc3838"/><path d="M3.1 3.1 L6.9 6.9 M6.9 3.1 L3.1 6.9" stroke="#fff" stroke-width="1.4"/></svg><svg class="abs" style="left:24px;top:7.75px" width="7" height="8" viewBox="0 0 7 8"><path d="M0.3 0.3 V7.7 L6.7 4 Z" fill="#6e6e6e"/></svg><svg class="abs" style="left:33.7px;top:7.75px" width="7" height="8" viewBox="0 0 7 8"><path d="M0.3 0.3 V7.7 L6.7 4 Z" fill="#6e6e6e"/></svg><div class="t " style="left:44px;top:4.75px"><span class="it"><span class="gray">{errMsg: </span><span class="str">"request:fail <span class="c">小程序要求的</span> TLS <span class="c">版本必须大于等于</span> 1.2"</span><span class="gray">}</span></span> "<span class="lnk">https://www.027xxw.cn/plugin.php?id=tom_x</span></div><div class="t " style="left:23px;top:19.75px"><span class="lnk">iaofenlei&amp;mod=get_list&amp;model_id=0&amp;utoken=&amp;token=gh_86725ece9f8e</span>"</div><div class="src" style="top:3.5px">requestUtil.js? [sm]:75</div></div></div>
<div class="row g" style="top:452px;height:20px;z-index:1"><div class="in"><svg class="abs" style="left:9.2px;top:3.9px" width="8" height="7" viewBox="0 0 8 7"><path d="M0.2 0.2 H7.8 L4 6.8 Z" fill="#6e6e6e"/></svg><div class="t b" style="left:23.5px;top:3.75px">Thu Oct 12 2017 20:39:59 GMT+0800 (<span class="c">中国标准时间</span>) wx.request <span class="c">错误</span></div><div class="src" style="top:3px">appservice:16</div></div></div>
<div class="row e" style="top:471px;height:34px;z-index:2"><div class="in"><div class="abs" style="left:12px;top:0;width:1px;height:31px;background:#a3a3a3"></div><div class="abs" style="left:12px;top:31px;width:4px;height:1px;background:#a3a3a3"></div><svg class="ei" style="left:20px;top:4px" viewBox="0 0 10 10"><circle cx="5" cy="5" r="5" fill="#dc3838"/><path d="M3.1 3.1 L6.9 6.9 M6.9 3.1 L3.1 6.9" stroke="#fff" stroke-width="1.4"/></svg><svg class="abs" style="left:37.7px;top:5.5px" width="7" height="8" viewBox="0 0 7 8"><path d="M0.3 0.3 V7.7 L6.7 4 Z" fill="#6e6e6e"/></svg><div class="t red" style="left:47px;top:3.25px"><span class="lnk">https://www.027xxw.cn</span> <span class="c">对应的服务器</span> TLS <span class="c">为</span> TLS 1.0 <span class="c">，</span><span class="c">小程序要求的</span> TLS <span class="c">版本必须大于等于</span> 1.2 <span class="c"><span class="tc" lang="zh-TW">。</span>控制台输入</span></div><div class="t red" style="left:37px;top:17.5px">showRequestInfo() <span class="c">可以获取更详细信息<span class="tc" lang="zh-TW">。</span></span></div><div class="src" style="top:3px">appservice:16</div></div></div>
<div class="row g" style="top:504px;height:22px;z-index:1"><div class="in"><svg class="abs" style="left:24px;top:8px" width="7" height="8" viewBox="0 0 7 8"><path d="M0.3 0.3 V7.7 L6.7 4 Z" fill="#6e6e6e"/></svg><div class="t " style="left:34.5px;top:5px">Object</div><div class="src" style="top:3.5px">app.js? [sm]:48</div></div></div>
<div class="row g" style="top:525px;height:20px;z-index:1"><div class="in"><svg class="abs" style="left:9.2px;top:3.9px" width="8" height="7" viewBox="0 0 8 7"><path d="M0.2 0.2 H7.8 L4 6.8 Z" fill="#6e6e6e"/></svg><div class="t b" style="left:23.5px;top:3.75px">Thu Oct 12 2017 20:40:00 GMT+0800 (<span class="c">中国标准时间</span>) wx.request <span class="c">错误</span></div><div class="src" style="top:3px">appservice:16</div></div></div>
<div class="row e" style="top:544px;height:34px;z-index:2"><div class="in"><div class="abs" style="left:12px;top:0;width:1px;height:31px;background:#a3a3a3"></div><div class="abs" style="left:12px;top:31px;width:4px;height:1px;background:#a3a3a3"></div><svg class="ei" style="left:20px;top:4px" viewBox="0 0 10 10"><circle cx="5" cy="5" r="5" fill="#dc3838"/><path d="M3.1 3.1 L6.9 6.9 M6.9 3.1 L3.1 6.9" stroke="#fff" stroke-width="1.4"/></svg><svg class="abs" style="left:37.7px;top:5.5px" width="7" height="8" viewBox="0 0 7 8"><path d="M0.3 0.3 V7.7 L6.7 4 Z" fill="#6e6e6e"/></svg><div class="t red" style="left:47px;top:3.25px"><span class="lnk">https://www.027xxw.cn</span> <span class="c">对应的服务器</span> TLS <span class="c">为</span> TLS 1.0 <span class="c">，</span><span class="c">小程序要求的</span> TLS <span class="c">版本必须大于等于</span> 1.2 <span class="c"><span class="tc" lang="zh-TW">。</span>控制台输入</span></div><div class="t red" style="left:37px;top:17.5px">showRequestInfo() <span class="c">可以获取更详细信息<span class="tc" lang="zh-TW">。</span></span></div><div class="src" style="top:3px">appservice:16</div></div></div>
<div class="row e" style="top:577px;height:22px;z-index:2"><div class="in"><svg class="ei" style="left:6px;top:3.5px" viewBox="0 0 10 10"><circle cx="5" cy="5" r="5" fill="#dc3838"/><path d="M3.1 3.1 L6.9 6.9 M6.9 3.1 L3.1 6.9" stroke="#fff" stroke-width="1.4"/></svg><svg class="abs" style="left:24px;top:8px" width="7" height="8" viewBox="0 0 7 8"><path d="M0.3 0.3 V7.7 L6.7 4 Z" fill="#6e6e6e"/></svg><svg class="abs" style="left:33.7px;top:8px" width="7" height="8" viewBox="0 0 7 8"><path d="M0.3 0.3 V7.7 L6.7 4 Z" fill="#6e6e6e"/></svg><div class="t " style="left:44px;top:5px"><span class="it"><span class="gray">{errMsg: </span><span class="str">"request:fail <span class="c">小程序要求的</span> TLS <span class="c">版本必须大于等于</span> 1.2"</span><span class="gray">}</span></span></div><div class="src" style="top:3.5px">requestUtil.js? [sm]:72</div></div></div>
</div>
<div id="vscroll"><svg class="abs" style="left:5px;top:6px" width="7" height="4" viewBox="0 0 7 4"><path d="M0 4 L3.5 0 L7 4 Z" fill="#a3a3a3"/></svg><i></i></div>
<div id="taskbar" style="z-index:9">
  <div class="abs" style="left:502px;top:0;width:115px;height:8px;background:#9e4f17"></div>
  <div class="abs" style="left:965px;top:0;width:115px;height:8px;background:#333"></div>
  <div class="abs" style="left:20px;top:7px;width:5px;height:1px;background:#bbb"></div>
  <div class="abs" style="left:170px;top:7px;width:5px;height:1px;background:#bbb"></div>
  <div class="abs" style="left:284px;top:7px;width:4px;height:1px;background:#b5501a"></div>
  <div class="abs" style="left:399px;top:7px;width:5px;height:1px;background:#ccc"></div>
  <div class="abs" style="left:630px;top:7px;width:5px;height:1px;background:#3a5fb0"></div>
  <div class="abs" style="left:743px;top:7px;width:12px;height:1px;background:#e8c373"></div>
  <div class="abs" style="left:858px;top:7px;width:12px;height:1px;background:#e8c373"></div>
  <div class="abs" style="left:972px;top:6px;width:16px;height:2px;background:#e8e8e8"></div>
  <div class="abs" style="left:1186px;top:7px;width:5px;height:1px;background:#bbb"></div>
  <div class="abs" style="left:1213px;top:7px;width:6px;height:1px;background:#bbb"></div>
  <div class="abs" style="left:1236px;top:7px;width:6px;height:1px;background:#bbb"></div>
  <div class="abs" style="left:1362px;top:7px;width:8px;height:1px;background:#666"></div>
</div>
<div id="wm" class="abs" style="z-index:10;left:1235px;top:821px;width:201px;height:52px;background:#fff">
  <svg class="abs" style="left:-2px;top:-1.3px" width="52" height="52" viewBox="0 0 52 52"><path d="M32.3 7.9 A19.3 19.3 0 1 1 19.5 8.5 C23.5 7.2 25.9 9 25.9 13.5 V27 H30.9 V35.5 A5.45 5.45 0 0 1 20 35.5 V24.9" fill="none" stroke="#1ea532" stroke-width="3.6" stroke-linecap="butt" stroke-linejoin="miter"/><circle cx="32.3" cy="7.9" r="1.7" fill="#1ea532"/><path d="M29 21.7 Q28.8 16.3 35.3 15 Q35.3 20.8 29 21.7 Z" fill="#7f9a3c" stroke="#8a7c18" stroke-width="0.5"/></svg>
  <div class="abs" style="left:52.5px;top:2px;line-height:36px;font-size:28px;font-weight:900;color:#444;white-space:nowrap;font-family:'Noto Serif CJK SC',serif;letter-spacing:0px">南京金友网</div>
  <div class="abs" style="left:53px;top:37px;line-height:10px;font-size:8.5px;color:#333;white-space:nowrap;letter-spacing:2.24px;font-family:'Liberation Sans',sans-serif;-webkit-text-stroke:0.2px #333">NANJINGJINYOUWANG</div>
</div>
</div>
</body></html>
